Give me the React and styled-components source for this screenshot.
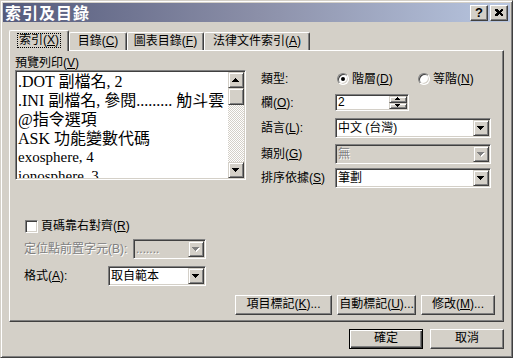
import styled, { createGlobalStyle } from 'styled-components'

const FACE = '#D4D0C8'

const Global = createGlobalStyle`
  html, body {
    margin: 0;
    padding: 0;
    background: ${FACE};
  }
  body {
    font-family: "Liberation Sans", "Noto Sans CJK TC", sans-serif;
    font-size: 12px;
    color: #000;
  }
  u { text-decoration: underline; text-underline-offset: 1px; }
`

const Window = styled.div`
  box-sizing: border-box;
  width: 513px;
  height: 358px;
  padding: 2px;
  background: ${FACE};
  border-top: 1px solid ${FACE};
  border-left: 1px solid ${FACE};
  border-right: 1px solid #404040;
  border-bottom: 1px solid #404040;
  box-shadow: inset 1px 1px #fff, inset -1px -1px #808080;
  display: flex;
  flex-direction: column;
`

const TitleBar = styled.div`
  height: 19px;
  display: flex;
  align-items: center;
  justify-content: space-between;
  padding: 0 2px 0 2px;
  background: linear-gradient(to right, #555b7c 0%, #8b8fa8 50%, #b8c6e0 100%);
`

const Title = styled.div`
  color: #fff;
  font-family: "Noto Sans CJK TC", sans-serif;
  font-weight: 700;
  font-size: 16px;
  line-height: 19px;
  letter-spacing: 1px;
`

const CaptionButtons = styled.div`
  display: flex;
  gap: 2px;
`

const CaptionButton = styled.div`
  box-sizing: border-box;
  width: 18px;
  height: 16px;
  display: flex;
  align-items: center;
  justify-content: center;
  background: ${FACE};
  border-top: 1px solid #fff;
  border-left: 1px solid #fff;
  border-right: 1px solid #404040;
  border-bottom: 1px solid #404040;
  box-shadow: inset -1px -1px #808080;
  font-family: "Liberation Sans", sans-serif;
  font-weight: 700;
  font-size: 13px;
  line-height: 14px;
`

const Body = styled.div`
  flex: 1;
  display: flex;
  flex-direction: column;
  padding: 8px 6px 0 6px;
`

const TabStrip = styled.div`
  height: 20px;
  display: flex;
  align-items: flex-end;
`

const Tab = styled.div`
  position: relative;
  z-index: ${p => (p.$active ? 1 : 0)};
  box-sizing: border-box;
  width: ${p => p.$w}px;
  height: ${p => (p.$active ? 21 : 18)}px;
  margin-bottom: ${p => (p.$active ? -1 : 0)}px;
  background: ${FACE};
  border-top: 1px solid #fff;
  border-left: 1px solid #fff;
  border-right: 1px solid #404040;
  border-radius: 2px 2px 0 0;
  box-shadow: inset -1px 0 #808080;
  text-align: center;
  padding-top: ${p => (p.$active ? 3 : 2)}px;
  line-height: 13px;
  white-space: nowrap;
`

const FocusLabel = styled.span`
  display: inline-block;
  height: 13px;
  padding: 0 1px;
  outline: 1px dotted #000;
`

const Panel = styled.div`
  box-sizing: border-box;
  height: 272px;
  padding: 5px 8px 0 5px;
  border-top: 1px solid #fff;
  border-left: 1px solid #fff;
  border-right: 1px solid #404040;
  border-bottom: 1px solid #404040;
  box-shadow: inset -1px -1px #808080;
  display: flex;
  flex-direction: column;
`

const TopSection = styled.div`
  display: flex;
`

const PreviewCol = styled.div`
  width: 235px;
  display: flex;
  flex-direction: column;
`

const Label = styled.div`
  height: 14px;
  line-height: 14px;
  white-space: nowrap;
  color: ${p => (p.$disabled ? '#808080' : '#000')};
  text-shadow: ${p => (p.$disabled ? '1px 1px #fff' : 'none')};
`

const Sunken = styled.div`
  box-sizing: border-box;
  border-top: 1px solid #808080;
  border-left: 1px solid #808080;
  border-right: 1px solid #fff;
  border-bottom: 1px solid #fff;
  box-shadow: inset 1px 1px #404040, inset -1px -1px ${FACE};
  padding: 1px;
`

const PreviewBox = styled(Sunken)`
  height: 110px;
  display: flex;
  background: #fff;
  overflow: hidden;
`

const PreviewText = styled.div`
  flex: 1;
  padding: 0 0 0 1px;
  overflow: hidden;
  font-family: "Liberation Serif", "Noto Sans CJK TC", serif;
  font-size: 16px;
  line-height: 19px;
  white-space: nowrap;
`

const PreviewLine = styled.div`
  font-size: ${p => (p.$small ? 15 : 16)}px;
`

const ScrollBar = styled.div`
  width: 16px;
  display: flex;
  flex-direction: column;
  background: repeating-conic-gradient(#fff 0% 25%, ${FACE} 0% 50%) 0 0 / 2px 2px;
`

const Raised = styled.div`
  box-sizing: border-box;
  background: ${FACE};
  border-top: 1px solid ${FACE};
  border-left: 1px solid ${FACE};
  border-right: 1px solid #404040;
  border-bottom: 1px solid #404040;
  box-shadow: inset 1px 1px #fff, inset -1px -1px #808080;
  display: flex;
  align-items: center;
  justify-content: center;
`

const ScrollButton = styled(Raised)`
  height: ${p => p.$h || 16}px;
  flex: none;
`

const ScrollTrack = styled.div`
  flex: 1;
`

const OptionsCol = styled.div`
  margin-left: 15px;
  padding-top: 16px;
  display: flex;
  flex-direction: column;
`

const OptRow = styled.div`
  display: grid;
  grid-template-columns: ${p => p.$labelW || 74}px auto;
  align-items: center;
  height: ${p => p.$h}px;
  margin-top: ${p => p.$mt || 0}px;
`

const RadioGroup = styled.div`
  display: flex;
`

const RadioOption = styled.div`
  width: ${p => p.$w}px;
  display: flex;
  align-items: center;
  gap: 3px;
  padding-left: 2px;
  line-height: 14px;
`

const OptionText = styled.span`
  white-space: nowrap;
  line-height: 14px;
`

const RadioCircle = styled.span`
  box-sizing: border-box;
  width: 12px;
  height: 12px;
  border-radius: 50%;
  border: 1px solid;
  border-color: #808080 #fff #fff #808080;
  background: #fff;
  box-shadow: inset 1px 1px #404040, inset -1px -1px ${FACE};
  display: flex;
  align-items: center;
  justify-content: center;

  &::after {
    content: '';
    width: 4px;
    height: 4px;
    border-radius: 50%;
    background: ${p => (p.$checked ? '#000' : 'transparent')};
  }
`

const Spin = styled(Sunken)`
  width: 74px;
  height: 17px;
  background: #fff;
  display: flex;
  align-items: center;
`

const FieldText = styled.div`
  flex: 1;
  padding-left: 1px;
  line-height: 13px;
  font-size: 12px;
  color: ${p => (p.$disabled ? '#808080' : '#000')};
  text-shadow: ${p => (p.$disabled ? '1px 1px #fff' : 'none')};
  white-space: nowrap;
`

const SpinButtons = styled.div`
  align-self: stretch;
  width: 18px;
  display: flex;
  flex-direction: column;
`

const SpinButton = styled(Raised)`
  flex: 1;
`

const Combo = styled(Sunken)`
  width: ${p => p.$w}px;
  height: 20px;
  display: flex;
  align-items: stretch;
  background: ${p => (p.$disabled ? FACE : '#fff')};
`

const ComboText = styled(FieldText)`
  display: flex;
  align-items: center;
  padding-left: 1px;
  line-height: 16px;
  overflow: hidden;
`

const ComboButton = styled(Raised)`
  width: 16px;
  flex: none;
`

const LowerSection = styled.div`
  margin-top: 31px;
  padding-left: 9px;
  display: flex;
  flex-direction: column;
`

const CheckRow = styled.div`
  height: 14px;
  padding-left: 1px;
  display: flex;
  align-items: center;
  gap: 3px;
`

const CheckBox = styled(Sunken)`
  width: 13px;
  height: 13px;
  padding: 0;
  background: #fff;
`

const ButtonRow = styled.div`
  margin-top: auto;
  margin-bottom: 6px;
  display: flex;
  justify-content: flex-end;
  gap: 5px;
`

const PushButton = styled.div`
  box-sizing: border-box;
  width: ${p => p.$w}px;
  height: 20px;
  background: ${FACE};
  text-align: center;
  line-height: 17px;
  white-space: nowrap;
  border: 1px solid;
  border-color: ${p => (p.$default ? '#000' : '#fff #404040 #404040 #fff')};
  box-shadow: ${p =>
    p.$default
      ? 'inset 1px 1px #fff, inset -1px -1px #404040, inset -2px -2px #808080'
      : 'inset -1px -1px #808080'};
`

const Footer = styled.div`
  margin-top: 7px;
  display: flex;
  justify-content: flex-end;
  gap: 7px;
`

function Tri({ dir = 'down', size = 4, disabled }) {
  const w = size * 2 - 1
  const rows = []
  for (let i = 0; i < size; i++) {
    rows.push({ x: i, y: dir === 'down' ? i : size - 1 - i, w: w - i * 2 })
  }
  return (
    <svg width={w + 1} height={size + 1} shapeRendering="crispEdges">
      {disabled &&
        rows.map((r, i) => (
          <rect key={'s' + i} x={r.x + 1} y={r.y + 1} width={r.w} height={1} fill="#fff" />
        ))}
      {rows.map((r, i) => (
        <rect key={i} x={r.x} y={r.y} width={r.w} height={1} fill={disabled ? '#808080' : '#000'} />
      ))}
    </svg>
  )
}

function ComboBox({ w, value, disabled }) {
  return (
    <Combo $w={w} $disabled={disabled}>
      <ComboText $disabled={disabled}>{value}</ComboText>
      <ComboButton>
        <Tri disabled={disabled} />
      </ComboButton>
    </Combo>
  )
}

export default function App() {
  return (
    <>
      <Global />
      <Window>
        <TitleBar>
          <Title>索引及目錄</Title>
          <CaptionButtons>
            <CaptionButton>?</CaptionButton>
            <CaptionButton>
              <svg width="8" height="7" shapeRendering="crispEdges">
                <path d="M0 0h2l2 2 2-2h2v1l-2 2.5 2 2.5v1h-2l-2-2-2 2h-2v-1l2-2.5-2-2.5z" fill="#000" />
              </svg>
            </CaptionButton>
          </CaptionButtons>
        </TitleBar>

        <Body>
          <TabStrip>
            <Tab $active $w={60}>
              <FocusLabel>索引(<u>X</u>)</FocusLabel>
            </Tab>
            <Tab $w={58}>目錄(<u>C</u>)</Tab>
            <Tab $w={77}>圖表目錄(<u>F</u>)</Tab>
            <Tab $w={106}>法律文件索引(<u>A</u>)</Tab>
          </TabStrip>

          <Panel>
            <TopSection>
              <PreviewCol>
                <Label>預覽列印(<u>V</u>)</Label>
                <PreviewBox>
                  <PreviewText>
                    <PreviewLine>.DOT 副檔名, 2</PreviewLine>
                    <PreviewLine>.INI 副檔名, 參閱......... 觔斗雲</PreviewLine>
                    <PreviewLine>@指令選項</PreviewLine>
                    <PreviewLine>ASK 功能變數代碼</PreviewLine>
                    <PreviewLine $small>exosphere, 4</PreviewLine>
                    <PreviewLine $small>ionosphere, 3</PreviewLine>
                  </PreviewText>
                  <ScrollBar>
                    <ScrollButton>
                      <Tri dir="up" />
                    </ScrollButton>
                    <ScrollButton $h={17} />
                    <ScrollTrack />
                    <ScrollButton>
                      <Tri />
                    </ScrollButton>
                  </ScrollBar>
                </PreviewBox>
              </PreviewCol>

              <OptionsCol>
                <OptRow $h={14}>
                  <Label>類型:</Label>
                  <RadioGroup>
                    <RadioOption $w={79}>
                      <RadioCircle $checked />
                      <OptionText>階層(<u>D</u>)</OptionText>
                    </RadioOption>
                    <RadioOption $w={77}>
                      <RadioCircle />
                      <OptionText>等階(<u>N</u>)</OptionText>
                    </RadioOption>
                  </RadioGroup>
                </OptRow>
                <OptRow $h={17} $mt={8}>
                  <Label>欄(<u>O</u>):</Label>
                  <Spin>
                    <FieldText>2</FieldText>
                    <SpinButtons>
                      <SpinButton>
                        <Tri dir="up" size={3} />
                      </SpinButton>
                      <SpinButton>
                        <Tri size={3} />
                      </SpinButton>
                    </SpinButtons>
                  </Spin>
                </OptRow>
                <OptRow $h={20} $mt={7}>
                  <Label>語言(<u>L</u>):</Label>
                  <ComboBox w={156} value="中文 (台灣)" />
                </OptRow>
                <OptRow $h={20} $mt={6}>
                  <Label>類別(<u>G</u>)</Label>
                  <ComboBox w={156} value="無" disabled />
                </OptRow>
                <OptRow $h={20} $mt={4}>
                  <Label>排序依據(<u>S</u>)</Label>
                  <ComboBox w={156} value="筆劃" />
                </OptRow>
              </OptionsCol>
            </TopSection>

            <LowerSection>
              <CheckRow>
                <CheckBox />
                <OptionText>頁碼靠右對齊(<u>R</u>)</OptionText>
              </CheckRow>
              <OptRow $h={20} $mt={6} $labelW={109}>
                <Label $disabled>定位點前置字元(B):</Label>
                <ComboBox w={73} value="......." disabled />
              </OptRow>
              <OptRow $h={20} $mt={7} $labelW={84}>
                <Label>格式(<u>A</u>):</Label>
                <ComboBox w={98} value="取自範本" />
              </OptRow>
            </LowerSection>

            <ButtonRow>
              <PushButton $w={97}>項目標記(<u>K</u>)...</PushButton>
              <PushButton $w={79}>自動標記(<u>U</u>)...</PushButton>
              <PushButton $w={74}>修改(<u>M</u>)...</PushButton>
            </ButtonRow>
          </Panel>

          <Footer>
            <PushButton $default $w={74}>確定</PushButton>
            <PushButton $w={74}>取消</PushButton>
          </Footer>
        </Body>
      </Window>
    </>
  )
}
